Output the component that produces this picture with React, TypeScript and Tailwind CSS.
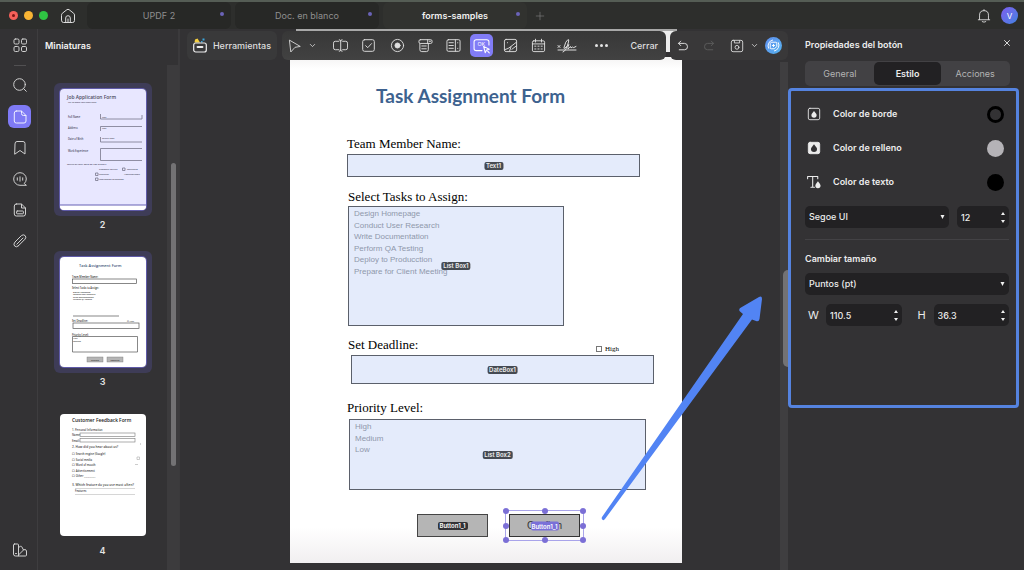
import { useState, type ReactNode } from "react";

function Icon({ children, size = 16, className = "" }: { children: ReactNode; size?: number; className?: string }) {
  return (
    <svg
      width={size}
      height={size}
      viewBox="0 0 16 16"
      fill="none"
      stroke="currentColor"
      strokeWidth="1"
      strokeLinecap="round"
      strokeLinejoin="round"
      className={className}
      aria-hidden="true"
    >
      {children}
    </svg>
  );
}

const tabs = [
  { title: "UPDF 2", active: false },
  { title: "Doc. en blanco", active: false },
  { title: "forms-samples", active: true },
];

function TopBar() {
  return (
    <header className="flex h-[29px] items-center border-t-2 border-[#555d55] bg-[#2d2e2c] pl-[9px] pr-[6px]">
      <div className="flex gap-[6px]">
        <button aria-label="Cerrar ventana" className="flex size-[9px] items-center justify-center rounded-full bg-[#f4605a]">
          <span className="size-[3px] rounded-full bg-[#7a1512]" />
        </button>
        <button aria-label="Minimizar" className="size-[9px] rounded-full bg-[#f8b434]" />
        <button aria-label="Maximizar" className="size-[9px] rounded-full bg-[#2fc343]" />
      </div>
      <button aria-label="Inicio" className="ml-[12px] text-[#dcdcdc]">
        <Icon size={16}>
          <path d="M1.5 7 Q1.5 6 2.3 5.3 L6.9 1.7 Q8 .9 9.1 1.7 L13.7 5.3 Q14.5 6 14.5 7 V12.5 Q14.5 14.5 12.5 14.5 H3.5 Q1.5 14.5 1.5 12.5 Z" />
          <path d="M5.7 14.2 V10 Q5.7 7.7 8 7.7 Q10.3 7.7 10.3 10 V14.2 M8 14.2 V11" />
        </Icon>
      </button>
      <nav className="ml-[11px] flex h-full gap-1">
        {tabs.map((tab) => (
          <button
            key={tab.title}
            className={
              tab.active
                ? "relative w-[144px] rounded-md bg-[#31322f] text-[9px] font-semibold text-[#f0f0f0]"
                : "relative w-[144px] rounded-md bg-[#272826] text-[9px] text-[#8f8f8f]"
            }
          >
            {tab.title}
            <span className="absolute right-[7px] top-[10px] size-1 rounded-full bg-[#6a63b8]" />
          </button>
        ))}
      </nav>
      <button aria-label="Nueva pestaña" className="ml-[8px] text-[#808080]">
        <Icon size={10}>
          <path d="M8 2 V14 M2 8 H14" />
        </Icon>
      </button>
      <button aria-label="Notificaciones" className="ml-auto text-[#e0e0e0]">
        <Icon size={14}>
          <path d="M1.5 12.3 H14.5 M2.9 12 V7 Q2.9 1.9 8 1.9 Q13.1 1.9 13.1 7 V12 M8 1.8 V.7 M6 14.5 Q8 15.8 10 14.5" />
        </Icon>
      </button>
      <button
        aria-label="Cuenta"
        className="ml-[10px] size-[17px] rounded-full bg-gradient-to-br from-[#7c5cf0] to-[#3b82e0] text-[8px] text-white"
      >
        V
      </button>
    </header>
  );
}

function Rail() {
  return (
    <aside className="flex w-[38px] shrink-0 flex-col items-center border-r border-[#3e3d3f] pb-[12px] pl-[2px] pt-[8px] text-[#d0d0d0]">
      <button aria-label="Panel">
        <Icon size={16}>
          <rect x="2" y="2" width="5" height="5" rx="1.3" />
          <rect x="9.5" y="2" width="5" height="5" rx="1.3" />
          <rect x="2" y="9.5" width="5" height="5" rx="1.3" />
          <rect x="9.5" y="9.5" width="5" height="5" rx="1.3" />
        </Icon>
      </button>
      <hr className="mt-[12px] w-[12px] border-[#515052]" />
      <button aria-label="Buscar" className="mt-[11px]">
        <Icon>
          <circle cx="7.5" cy="7.5" r="5.8" />
          <path d="M11.7 11.7 L14.3 14.3" />
        </Icon>
      </button>
      <button
        aria-label="Miniaturas"
        className="mt-[12px] flex size-[23px] items-center justify-center rounded-md bg-[#7f7af5] text-[#eeeeff]"
      >
        <Icon>
          <path d="M4.3 2 H9.5 L14 6.5 V12 Q14 14 12 14 H4.3 Q2.3 14 2.3 12 V4 Q2.3 2 4.3 2 Z M9.5 2.2 V4.5 Q9.5 6.5 11.5 6.5 H13.8" />
        </Icon>
      </button>
      <button aria-label="Marcadores" className="mt-[12px]">
        <Icon>
          <path d="M3 3.5 Q3 1.5 5 1.5 H11 Q13 1.5 13 3.5 V14 L8 10.5 L3 14 Z" />
        </Icon>
      </button>
      <button aria-label="Comentarios" className="mt-[15px]">
        <Icon>
          <path d="M14 14.3 H8 A6.3 6.3 0 1 1 14.3 8 Q14.3 10.5 12.5 12.3 Z" />
          <path d="M5.3 6.8 V9.2 M8 5.8 V10.2 M10.7 6.8 V9.2" />
        </Icon>
      </button>
      <button aria-label="Campos" className="mt-[15px]">
        <Icon>
          <path d="M4.3 2 H9.5 L13.5 6 V12 Q13.5 14 11.5 14 H4.3 Q2.3 14 2.3 12 V4 Q2.3 2 4.3 2 Z M9.5 2.2 V6 H13.3" />
          <rect x="4.6" y="9" width="6.8" height="2.8" rx=".6" />
        </Icon>
      </button>
      <button aria-label="Adjuntos" className="mt-[15px]">
        <Icon>
          <path d="M6.2 13 L13 6.2 Q14.8 4 13 2.5 Q11.3 1 9.3 2.7 L3 9 Q1 11.3 2.6 13 Q4.3 14.7 6.2 13 Z M4.8 11.2 L11 5" />
        </Icon>
      </button>
      <button aria-label="Apariencia" className="mt-auto">
        <Icon>
          <path d="M2.5 2 H5.5 Q6.5 2 6.5 3 V14 H3.5 Q1.5 14 1.5 12 V3 Q1.5 2 2.5 2 Z M3.5 11.5 H4.5 M6.5 5.5 L8.5 4.3 Q9.3 4 9.8 4.8 L11.5 8 L6.5 13 M11.5 8 L13 7.5 Q14 7.5 14.5 9 V13 Q14.5 14 13.5 14 H6.5" />
        </Icon>
      </button>
    </aside>
  );
}

function JobThumb() {
  return (
    <svg viewBox="0 0 86 121" className="block w-full rounded-sm" role="img" aria-label="Job Application Form">
      <rect width="86" height="121" fill="#e8e7ff" />
      <rect y="116" width="86" height="5" fill="#fff" />
      <path d="M0 116 H86" stroke="#6661b5" />
      <g fontFamily="Open Sans, sans-serif" fill="#4a4a60">
        <text x="7" y="10" fontSize="4.9" fontWeight="600">Job Application Form</text>
        <text x="8" y="14" fontSize="2">Tell us about your experience</text>
        <text x="8" y="29" fontSize="2.5">Full Name</text>
        <text x="8" y="40" fontSize="2.5">Address</text>
        <text x="8" y="51" fontSize="2.5">Date of Birth</text>
        <text x="8" y="63" fontSize="2.5">Work Experience</text>
        <text x="7" y="76" fontSize="2.4">Which of your days do you prefer?</text>
        <text x="42" y="29" fontSize="2">Text</text>
        <text x="42" y="40" fontSize="2">Text</text>
        <text x="42" y="50" fontSize="2">Select a date</text>
        <text x="39" y="81" fontSize="2.2">Customer Service</text>
        <text x="67" y="81" fontSize="2.2">Marketing</text>
        <text x="39" y="86" fontSize="2.2">Technical</text>
        <text x="64" y="86" fontSize="2.2">Administration</text>
        <text x="39" y="91" fontSize="2.2">Information technology</text>
      </g>
      <g fill="none" stroke="#77778c" strokeWidth=".8">
        <path d="M40.5 25 V30 H82 V26 M82 37.5 H40.5 V42 M40.5 48 V53 H82 M82 59.5 H40.5 V71.5 H82" />
        <path d="M62.5 79 H65 V81.5 H62.5 Z M35.5 84 H38 V86.5 H35.5 Z M35.5 89 H38 V91.5 H35.5 Z" />
      </g>
    </svg>
  );
}

function TaskThumb() {
  return (
    <svg viewBox="0 0 86 110" className="block w-full rounded-sm" role="img" aria-label="Task Assignment Form">
      <rect width="86" height="110" fill="#fff" />
      <g fontFamily="Open Sans, sans-serif" fill="#333">
        <text x="19" y="10" fontSize="3.9" fontWeight="600" fill="#3b5578">Task Assignment Form</text>
        <text x="12" y="20.5" fontSize="2.5">Team Member Name:</text>
        <text x="12" y="32" fontSize="2.5">Select Tasks to Assign:</text>
        <text x="13" y="35.5" fontSize="2">Design Homepage</text>
        <text x="13" y="38" fontSize="2">Conduct User Research</text>
        <text x="13" y="40.5" fontSize="2">Write Documentation</text>
        <text x="13" y="43" fontSize="2">Perform QA Testing</text>
        <text x="12" y="64.5" fontSize="2.5">Set Deadline:</text>
        <text x="67" y="65" fontSize="2">☐ High</text>
        <text x="12" y="78.5" fontSize="2.5">Priority Level:</text>
        <text x="13" y="82" fontSize="2">High</text>
        <text x="13" y="84.5" fontSize="2">Medium</text>
      </g>
      <g fill="none" stroke="#555" strokeWidth=".7">
        <rect x="12.5" y="22" width="64" height="4.5" />
        <path d="M13 59 H59" />
        <rect x="13" y="66" width="66" height="5.5" />
        <path d="M12.5 95 V79.5 H77.5 V95 Z" />
      </g>
      <rect x="27" y="100" width="16" height="5" fill="#b5b5b5" stroke="#777" strokeWidth=".4" />
      <rect x="47" y="100" width="16" height="5" fill="#b5b5b5" stroke="#777" strokeWidth=".4" />
      <g fontFamily="Open Sans, sans-serif" fontSize="2.3" fill="#333" textAnchor="middle">
        <text x="35" y="103.5">Submit</text>
        <text x="55" y="103.5">Confirm</text>
      </g>
    </svg>
  );
}

function FeedbackThumb() {
  return (
    <svg viewBox="0 0 86 122" className="block w-full rounded-sm" role="img" aria-label="Customer Feedback Form">
      <rect width="86" height="122" fill="#fff" />
      <g fontFamily="Open Sans, sans-serif" fill="#444" fontSize="2.7">
        <text x="12" y="8" fontSize="4.8" fill="#222">Customer Feedback Form</text>
        <text x="12" y="16.5">1. Personal Information</text>
        <text x="12" y="22">Name:</text>
        <text x="12" y="27.5">Email:</text>
        <text x="12" y="34" fontSize="3.2">2. How did you hear about us?</text>
        <text x="12" y="41">☐ Search engine (Google)</text>
        <text x="12" y="46.5">☐ Social media</text>
        <text x="12" y="52">☐ Word of mouth</text>
        <text x="12" y="57.5">☐ Advertisement</text>
        <text x="12" y="63">☐ Other __________</text>
        <text x="12" y="71.5" fontSize="3.2">3. Which feature do you use most often?</text>
        <text x="15" y="78">Features</text>
      </g>
      <g fill="none" stroke="#777" strokeWidth=".6">
        <rect x="20" y="19" width="55" height="3.5" />
        <rect x="20" y="24.5" width="55" height="3.5" />
        <path d="M15 74.5 H75 M15 80.5 H75" stroke="#bbb" />
        <path d="M77 43 H79.5 V45.5 H77 Z M75 50.5 H78" stroke="#aaa" />
        <path d="M80.5 29.5 v1" />
      </g>
    </svg>
  );
}

const thumbs = [
  { page: 2, selected: true, art: <JobThumb /> },
  { page: 3, selected: true, art: <TaskThumb /> },
  { page: 4, selected: false, art: <FeedbackThumb /> },
];

function Thumbnails() {
  return (
    <section className="relative w-[142px] shrink-0 border-r-2 border-[#3b3a3c]">
      <h2 className="pl-[7px] pt-[9px] text-[9px] font-semibold leading-4 text-[#f2f2f2]">Miniaturas</h2>
      <div className="mt-[29px] flex flex-col items-center gap-[18px] pr-[11px]">
        {thumbs.map((t) => (
          <button key={t.page} className="block text-[9px] font-semibold text-[#e4e4e4]">
            <span className={t.selected ? "block w-[98px] rounded-md bg-[#3e3c57] p-[6px]" : "block w-[98px] p-[6px]"}>
              <span className={t.selected ? "block rounded-sm ring-1 ring-[#5f5aa8]" : "block"}>{t.art}</span>
            </span>
            <span className="block leading-[17px]">{t.page}</span>
          </button>
        ))}
      </div>
      <div className="absolute bottom-0 right-[-1px] top-[36px] w-[12px] bg-[#3c3b3d]">
        <div className="ml-[4px] mt-[98px] h-[303px] w-[5px] rounded-full bg-[#737274]" />
      </div>
    </section>
  );
}

const fieldTools = [
  {
    name: "Campo de texto",
    art: <path d="M6.2 3.5 H2.5 Q.5 3.5 .5 5.5 V10.5 Q.5 12.5 2.5 12.5 H6.2 M10.3 3.5 H13.5 Q15.5 3.5 15.5 5.5 V10.5 Q15.5 12.5 13.5 12.5 H10.3 M8.2 3.5 V12.5 M6.7 1.8 Q8.2 1.8 8.2 3.5 Q8.2 1.8 9.7 1.8 M6.7 14.2 Q8.2 14.2 8.2 12.5 Q8.2 14.2 9.7 14.2" />,
  },
  {
    name: "Casilla",
    art: (
      <>
        <rect x="1.8" y="1.8" width="12.4" height="12.4" rx="2" />
        <path d="M5 8.2 L7.2 10.3 L11.2 6" />
      </>
    ),
  },
  {
    name: "Botón de opción",
    art: (
      <>
        <circle cx="8" cy="8" r="6.5" />
        <circle cx="8" cy="8" r="2.7" fill="currentColor" />
      </>
    ),
  },
  {
    name: "Lista desplegable",
    art: (
      <>
        <rect x="1" y="1.8" width="14" height="4" rx="1.5" />
        <path d="M10.3 2 V5.6 M12 3.5 H13.4 M2 6 V12.5 Q2 14.5 4 14.5 H9 Q11 14.5 11 12.5 V6 M4 8.5 H8.8 M4 11.5 H8.8" />
      </>
    ),
  },
  {
    name: "Cuadro de lista",
    art: (
      <>
        <rect x="1" y="1.8" width="14" height="12.4" rx="1.5" />
        <path d="M10 2 V14 M3.2 5 H7.8 M3.2 8 H7.8 M3.2 11 H7.8 M12.5 5 V5.2 M12.5 11 V11.2" />
      </>
    ),
  },
  {
    name: "Botón",
    active: true,
    art: (
      <>
        <path d="M8.5 12.8 H3 Q1 12.8 1 10.8 V4.5 Q1 2.5 3 2.5 H13 Q15 2.5 15 4.5 V7.5" />
        <path d="M10 8.8 L15.3 11.5 L12.8 12.3 L11.5 14.8 Z M13.8 13.3 L15.3 15" />
        <text x="4.2" y="8.8" fontSize="5" fontFamily="Inter, sans-serif" fill="currentColor" stroke="none">OK</text>
      </>
    ),
  },
  {
    name: "Imagen",
    art: (
      <>
        <rect x="1.5" y="1.5" width="13" height="13" rx="1.8" />
        <path d="M1.8 12.5 Q6 11.5 8.5 9 L14.3 4.5 M8.5 9.5 L7 14 M9.5 12 L14.2 8.5 M4.8 5 V5.1" />
      </>
    ),
  },
  {
    name: "Fecha",
    art: (
      <>
        <rect x="1.5" y="3" width="13" height="11.5" rx="1.5" />
        <path d="M1.5 6.3 H14.5 M4.8 1.3 V4.3 M11.2 1.3 V4.3 M4 8.7 H5.2 M7.4 8.7 H8.6 M10.8 8.7 H12 M4 11.7 H5.2 M7.4 11.7 H8.6 M10.8 11.7 H12" />
      </>
    ),
  },
];

function Toolbar() {
  return (
    <div className="relative z-10 flex h-[31px] pl-[7px] pt-[2px] text-[#dedede]">
      {/* top edge of the sheet scrolled under the toolbar */}
      <div className="absolute left-[116px] right-[111px] top-0 h-[23px] border-t-2 border-[#a8a8a8] bg-[#ededed]" />
      <button className="relative flex w-[90px] items-center justify-center gap-[6px] rounded-md bg-[#39393a] text-[9px] font-medium">
        <svg width="14" height="15" viewBox="0 0 14 15" fill="none" aria-hidden="true">
          <path d="M1.5 4.5 L2 1.5 L4.5 .5 L7 4.5 Z" fill="#f6cf3f" />
          <path d="M9.5 .5 h2 v2 h-2 Z M8 3 h1.5 v1.5 H8 Z" fill="#3aa7dd" />
          <rect x=".7" y="5" width="12.6" height="9" rx="2" stroke="#eee" strokeWidth="1.2" />
          <path d="M4.5 9 h5" stroke="#eee" strokeWidth="1.8" strokeLinecap="round" />
        </svg>
        Herramientas
      </button>
      <div className="relative ml-[5px] flex min-w-0 flex-1 items-center rounded-md bg-gradient-to-b from-[#373737] to-[#424242] pl-[6px] pr-[8px]">
        <button aria-label="Seleccionar" className="w-[18px]">
          <Icon size={14}>
            <path d="M2 1.5 L14 8.5 L8 9.5 L3.5 14.5 Z" />
          </Icon>
        </button>
        <button aria-label="Más modos" className="w-[12px] pl-[3px]">
          <Icon size={7}>
            <path d="M3 5.5 L8 10.5 L13 5.5" strokeWidth="1.8" />
          </Icon>
        </button>
        <div className="ml-[11px] flex min-w-0 flex-1 items-center justify-between">
          {fieldTools.map((tool) => (
            <button
              key={tool.name}
              aria-label={tool.name}
              className={
                tool.active
                  ? "flex size-[23px] items-center justify-center rounded-[5px] bg-[#817cf6] text-white"
                  : "flex size-[23px] items-center justify-center"
              }
            >
              <Icon size={tool.active ? 17 : 15}>{tool.art}</Icon>
            </button>
          ))}
          <button aria-label="Firma" className="flex w-[23px] justify-center">
            <svg width="20" height="16" viewBox="0 0 20 16" fill="none" stroke="currentColor" strokeLinecap="round" strokeLinejoin="round" aria-hidden="true">
              <path d="M1 7.5 L3 9.5 M3 7.5 L1 9.5 M1 12 H19 M6 14 Q9 13.5 11.5 4 Q12.2 1 11 1.5 Q8.5 3 7 9.5 Q6.5 11 8 10 L12 6.5 Q10.5 9 11 11 Q12 10.5 13.5 8.5 Q13.5 11 15.5 9 Q16 10.5 19 8.5" />
            </svg>
          </button>
        </div>
        <button aria-label="Más" className="ml-[17px] mr-[22px] flex gap-[2px]">
          <span className="size-[3px] rounded-full bg-[#e4e4e4]" />
          <span className="size-[3px] rounded-full bg-[#e4e4e4]" />
          <span className="size-[3px] rounded-full bg-[#e4e4e4]" />
        </button>
        <button className="text-[9px] font-medium">Cerrar</button>
      </div>
      <div className="relative ml-[4px] flex w-[118px] items-center rounded-md bg-[#393839] pl-[7px]">
        <button aria-label="Deshacer" className="w-[26px]">
          <Icon size={12}>
            <path d="M5 1.5 L2 4.5 L5 7.5 M2 4.5 H10 Q14 4.5 14 9 Q14 13 10 13 H3" strokeWidth="1.3" />
          </Icon>
        </button>
        <button aria-label="Rehacer" className="w-[27px] text-[#5c5c5c]" disabled>
          <Icon size={12}>
            <path d="M11 1.5 L14 4.5 L11 7.5 M14 4.5 H6 Q2 4.5 2 9 Q2 13 6 13 H13" strokeWidth="1.3" />
          </Icon>
        </button>
        <button aria-label="Guardar">
          <Icon size={14}>
            <path d="M3.5 1.5 H12.5 Q14.5 1.5 14.5 3.5 V12.5 Q14.5 14.5 12.5 14.5 H3.5 Q1.5 14.5 1.5 12.5 V3.5 Q1.5 1.5 3.5 1.5 Z M5 1.8 V4.5 H11 V1.8" />
            <circle cx="8" cy="9.5" r="2.2" />
          </Icon>
        </button>
        <button aria-label="Opciones de guardado" className="ml-[7px]">
          <Icon size={7}>
            <path d="M3 5.5 L8 10.5 L13 5.5" strokeWidth="1.8" />
          </Icon>
        </button>
        <button
          aria-label="Asistente"
          className="ml-[7px] flex size-[17px] items-center justify-center rounded-full bg-gradient-to-br from-[#5f8ff0] to-[#56b3ee] text-white"
        >
          <Icon size={15}>
            <path d="M6 4.5 H10.5 Q11.5 4.5 11.5 5.5 V9 L9 11.5 H5.5 Q4.5 11.5 4.5 10.5 V6 Z M8 6.8 V9.2 M6.8 8 H9.2" />
            <path d="M2.8 11 A6 6 0 0 1 7 2.2 M13.2 5 A6 6 0 0 1 9 13.8" />
          </Icon>
        </button>
      </div>
    </div>
  );
}

function Tag({ children }: { children: ReactNode }) {
  return (
    <span className="absolute left-1/2 top-1/2 -translate-x-1/2 -translate-y-1/2 whitespace-nowrap rounded-xs bg-[#454a52] px-[2px] text-[6px] font-semibold leading-[8px] text-[#f0f0f0]">
      {children}
    </span>
  );
}

const fieldBox = "relative border border-[#5b606b] bg-[#e4ebfb]";
const formLabel = "block text-[13px] leading-[16px]";

const tasks = [
  "Design Homepage",
  "Conduct User Research",
  "Write Documentation",
  "Perform QA Testing",
  "Deploy to Producction",
  "Prepare for Client Meeting",
];

const handles = [
  "left-0 top-0",
  "left-1/2 top-0",
  "left-full top-0",
  "left-0 top-1/2",
  "left-full top-1/2",
  "left-0 top-full",
  "left-1/2 top-full",
  "left-full top-full",
];

function FormPage() {
  return (
    <article className="mx-auto w-[392px] bg-[linear-gradient(#f4f3f3,#ffffff_12px,#ffffff_470px,#f1eff0)] pb-[26px] pl-[57px] pt-[25px] text-black">
      <h1 className="pl-[29px] font-['Lato',sans-serif] text-[19px] font-bold leading-[28px] text-[#3d628f]">
        Task Assignment Form
      </h1>
      <div className="mt-[26px] font-['Liberation_Serif',serif]">
        <label htmlFor="member" className={formLabel}>Team Member Name:</label>
        <div className={`${fieldBox} mt-[2px] h-[23px] w-[293px]`}>
          <input id="member" className="block size-full px-1 text-[8px] outline-none" />
          <span className="font-['Inter',sans-serif]"><Tag>Text1</Tag></span>
        </div>
      </div>
      <div className="mt-[12px] pl-px">
        <h2 id="tasks" className={`${formLabel} font-['Liberation_Serif',serif]`}>Select Tasks to Assign:</h2>
        <div className={`${fieldBox} mt-px h-[120px] w-[216px] pl-[5px] pt-px`}>
          <ul role="listbox" aria-labelledby="tasks" className="grid h-[69px] font-['Liberation_Sans',sans-serif] text-[8px] leading-[11px] text-[#8f98ab]">
            {tasks.map((task) => (
              <li key={task} role="option" aria-selected="false">{task}</li>
            ))}
          </ul>
          <Tag>List Box1</Tag>
        </div>
      </div>
      <div className="mt-[11px] pl-px font-['Liberation_Serif',serif]">
        <div className="flex w-[271px] items-end justify-between">
          <label htmlFor="deadline" className={formLabel}>Set Deadline:</label>
          <label className="flex items-center gap-[3px] text-[7px] leading-[8px]">
            <input type="checkbox" className="size-[6px] appearance-none border border-[#777] bg-white" />
            High
          </label>
        </div>
        <div className={`${fieldBox} ml-[3px] mt-[2px] h-[29px] w-[303px]`}>
          <input id="deadline" className="block size-full px-1 text-[8px] outline-none" />
          <span className="font-['Inter',sans-serif]"><Tag>DateBox1</Tag></span>
        </div>
      </div>
      <div className="mt-[16px]">
        <h2 id="priority" className={`${formLabel} font-['Liberation_Serif',serif]`}>Priority Level:</h2>
        <div className={`${fieldBox} ml-[2px] mt-[3px] h-[71px] w-[297px] pl-[5px] pt-px`}>
          <ul role="listbox" aria-labelledby="priority" className="grid h-[35px] font-['Liberation_Sans',sans-serif] text-[8px] leading-[11px] text-[#8f98ab]">
            {["High", "Medium", "Low"].map((level) => (
              <li key={level} role="option" aria-selected="false">{level}</li>
            ))}
          </ul>
          <Tag>List Box2</Tag>
        </div>
      </div>
      <div className="mt-[24px] flex items-start gap-[21px] pl-[70px]">
        <button className="relative h-[23px] w-[71px] border border-[#444] bg-[#b5b5b5]">
          <span className="absolute left-1/2 top-1/2 -translate-x-1/2 -translate-y-1/2 rounded-xs bg-[#333336] px-[2px] text-[6px] font-semibold leading-[8px] text-white">
            Button1_1
          </span>
        </button>
        <div className="relative">
          <button className="relative block h-[23px] w-[71px] border border-[#333] bg-[#b5b5b5] font-['Liberation_Sans',sans-serif] text-[10px] leading-none text-[#333]">
            Confirm
            <span className="absolute left-1/2 top-1/2 -translate-x-1/2 -translate-y-1/2 rounded-xs bg-[#7a70d8] px-px font-['Inter',sans-serif] text-[6px] font-semibold leading-[9px] text-white">
              Button1_1
            </span>
          </button>
          <div className="pointer-events-none absolute -inset-x-1 -inset-y-1 border border-[#a9a4ea]">
            {handles.map((place) => (
              <span key={place} className={`absolute size-[6px] -translate-x-1/2 -translate-y-1/2 rounded-full bg-[#7b6fd6] ${place}`} />
            ))}
          </div>
        </div>
      </div>
    </article>
  );
}

function Canvas() {
  return (
    <main className="relative flex min-w-0 flex-1 flex-col bg-[#333234]">
      <Toolbar />
      <div className="pb-[7px] pl-[4px]">
        <div className="-mt-[3px]">
          <FormPage />
        </div>
      </div>
      <div className="absolute bottom-0 right-0 top-[33px] w-[8px] bg-[#3f3e40]">
        <div className="ml-[3px] mt-[208px] h-[97px] w-[5px] rounded-l-full bg-[#737274]" />
      </div>
      {/* callout arrow pointing to the highlighted panel */}
      <svg width="162" height="228" viewBox="0 0 162 228" className="pointer-events-none absolute right-[25px] top-[264px] z-20" aria-hidden="true">
        <path
          d="M1 224 L142 21 L139 18.5 Q137 16 140 14.5 L158 4 Q161 2.5 161 6 L158.5 26 Q158 29 155 28 L151 26.5 L4 226 Q2.5 228 1.3 226.5 Q.3 225.5 1 224 Z"
          fill="#5284f4"
        />
      </svg>
    </main>
  );
}

const colorRows = [
  {
    label: "Color de borde",
    swatch: "size-[17px] rounded-full border-[3px] border-black",
    icon: (
      <Icon size={14}>
        <rect x="1.5" y="1.5" width="13" height="13" rx="1.8" />
        <path d="M8 4.5 Q11 8 11 9.2 A3 3 0 0 1 5 9.2 Q5 8 8 4.5 Z" fill="currentColor" stroke="none" />
      </Icon>
    ),
  },
  {
    label: "Color de relleno",
    swatch: "size-[17px] rounded-full bg-[#b5b3b7]",
    icon: (
      <Icon size={14}>
        <rect x="1.5" y="1.5" width="13" height="13" rx="2" fill="currentColor" />
        <path d="M8 3.8 Q11.5 8 11.5 9.2 A3.5 3.5 0 0 1 4.5 9.2 Q4.5 8 8 3.8 Z" fill="#333234" stroke="none" />
      </Icon>
    ),
  },
  {
    label: "Color de texto",
    swatch: "size-[17px] rounded-full bg-black",
    icon: (
      <Icon size={14}>
        <path d="M.7 4.2 V1.7 H12.3 V4.2 M6.5 1.7 V14 M4.5 14 H8.5" strokeWidth="1.2" />
        <path d="M12.5 7 Q15.5 10.5 15.5 12 A3 3 0 0 1 9.5 12 Q9.5 10.5 12.5 7 Z" fill="currentColor" stroke="none" />
      </Icon>
    ),
  },
];

function Dropdown({ label, value, className }: { label: string; value: string; className: string }) {
  return (
    <div className={`relative ${className}`}>
      <select
        aria-label={label}
        defaultValue={value}
        className="block h-[22px] w-full appearance-none rounded-[5px] bg-[#222123] pl-[4px] text-[9px] font-medium text-[#ececec] outline-none"
      >
        <option>{value}</option>
      </select>
      <svg width="5" height="4" viewBox="0 0 5 4" className="pointer-events-none absolute right-[4px] top-[9px]" aria-hidden="true">
        <path d="M.5 0 H4.5 L2.5 4 Z" fill="#f0f0f0" />
      </svg>
    </div>
  );
}

function Stepper({ label, value, className }: { label: string; value: string; className: string }) {
  return (
    <div className={`flex h-[22px] items-center rounded-[5px] bg-[#222123] pr-[4px] ${className}`}>
      <input
        aria-label={label}
        defaultValue={value}
        className="h-full w-0 min-w-0 flex-1 pl-[4px] text-[9px] font-medium text-[#ececec] outline-none"
      />
      <div className="flex flex-col gap-[5px]">
        <button aria-label="Aumentar">
          <svg width="4" height="3" viewBox="0 0 4 3" className="block" aria-hidden="true">
            <path d="M0 3 H4 L2 0 Z" fill="#f0f0f0" />
          </svg>
        </button>
        <button aria-label="Disminuir">
          <svg width="4" height="3" viewBox="0 0 4 3" className="block" aria-hidden="true">
            <path d="M0 0 H4 L2 3 Z" fill="#f0f0f0" />
          </svg>
        </button>
      </div>
    </div>
  );
}

function Properties() {
  const [tab, setTab] = useState("Estilo");
  return (
    <aside className="w-[236px] shrink-0 bg-[#333234] text-[9px] text-[#ececec]">
      <div className="flex items-center justify-between pl-[17px] pr-[13px] pt-[8px]">
        <h2 className="font-semibold leading-4">Propiedades del botón</h2>
        <button aria-label="Cerrar panel" className="-mt-1">
          <Icon size={8}>
            <path d="M3 3 L13 13 M13 3 L3 13" strokeWidth="1.8" />
          </Icon>
        </button>
      </div>
      <div className="ml-[17px] mr-[14px] mt-[8px] flex h-[25px] rounded-[5px] bg-[#424144] p-px">
        {["General", "Estilo", "Acciones"].map((name) => (
          <button
            key={name}
            onClick={() => setTab(name)}
            className={
              name === tab
                ? "flex-1 rounded-[5px] bg-[#222123] font-semibold text-[#ececec]"
                : "flex-1 rounded-[5px] text-[#b4b4b4]"
            }
          >
            {name}
          </button>
        ))}
      </div>
      <div className="mr-[5px] mt-[2px] h-[320px] rounded-[4px] border-[3px] border-[#5583df] pl-[14px] pr-[7px] pt-[6px]">
        {colorRows.map((row) => (
          <div key={row.label} className="flex h-[34px] items-center pl-[2px] pr-[5px]">
            {row.icon}
            <span className="ml-[12px] font-semibold">{row.label}</span>
            <button aria-label={row.label} className={`ml-auto ${row.swatch}`} />
          </div>
        ))}
        <div className="mt-[7px] flex gap-[8px]">
          <Dropdown label="Fuente" value="Segoe UI" className="flex-1" />
          <Stepper label="Tamaño de fuente" value="12" className="w-[52px]" />
        </div>
        <hr className="mt-[11px] border-[#434245]" />
        <h3 className="mt-[11px] font-semibold leading-4">Cambiar tamaño</h3>
        <Dropdown label="Unidad" value="Puntos (pt)" className="mt-[6px]" />
        <div className="mt-[9px] flex items-center">
          <span className="w-[21px] pl-[3px] text-[11px]">W</span>
          <Stepper label="Ancho" value="110.5" className="flex-1" />
          <span className="w-[32px] pl-[16px] text-[11px]">H</span>
          <Stepper label="Alto" value="36.3" className="flex-1" />
        </div>
      </div>
    </aside>
  );
}

export default function App() {
  return (
    <div className="flex min-h-screen flex-col bg-[#333234] font-['Inter',sans-serif]">
      <TopBar />
      <div className="flex flex-1">
        <Rail />
        <Thumbnails />
        <Canvas />
        <Properties />
      </div>
    </div>
  );
}
